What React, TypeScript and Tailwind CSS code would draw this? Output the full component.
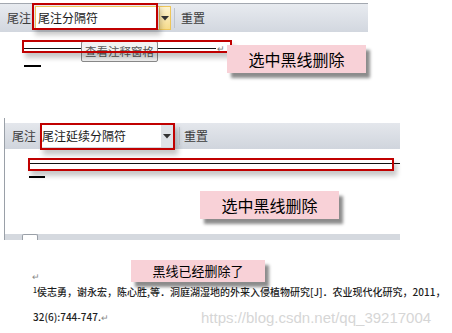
import React from 'react';

const cjk = { fontFamily: '"Noto Sans CJK SC", "Liberation Sans", sans-serif' };

// pink note with the hard grey shadow from the screenshot
const Callout: React.FC<{ text: string; className: string }> = ({ text, className }) => (
  <div
    className={`absolute flex items-center justify-center bg-[#f8d1d7] text-black shadow-[4px_5px_3px_rgba(0,0,0,0.45)] ${className}`}
  >
    {text}
  </div>
);

const RedBox: React.FC<{ className: string }> = ({ className }) => (
  <div
    className={`absolute border-2 border-[#c00000] shadow-[3px_5px_5px_rgba(0,0,0,0.22)] ${className}`}
  />
);

const Arrow: React.FC = () => (
  <svg width="8" height="5" viewBox="0 0 8 5">
    <path d="M0 0 L8 0 L4 4.5 Z" fill="#333" />
  </svg>
);

const App: React.FC = () => {
  return (
    <div className="relative w-[452px] h-[333px] overflow-hidden bg-white" style={cjk}>
      {/* first capture: separator dropdown */}
      <div className="relative h-[118px]">
        <div className="h-[3px]" />
        <div className="flex h-[29px] w-[368px] items-center border-t border-[#a3a8b0] bg-gradient-to-b from-[#e8ebf0] to-[#d2d7df]">
          <span className="ml-[7px] text-[12px] text-[#3c3c3c]">尾注</span>
          <div className="ml-[4px] flex h-[24px] w-[136px] border border-[#eec65a] bg-white">
            <span className="ml-[2px] flex-1 text-[12px] leading-[22px] text-[#1a1a1a]">尾注分隔符</span>
            <div className="flex w-[11px] items-center justify-center border-l border-[#eec65a] bg-gradient-to-b from-[#fdf3d0] to-[#f6dc8c]">
              <Arrow />
            </div>
          </div>
          <div className="ml-[3px] h-[20px] w-px bg-[#bfc4cb]" />
          <span className="ml-[6px] text-[12px] text-[#3c3c3c]">重置</span>
        </div>
        <div className="ml-[22px] mt-[12px] flex items-center">
          <div className="h-px w-[194px] bg-[#111]" />
          <span className="ml-[1px] text-[9px] leading-none text-[#777]">↵</span>
        </div>
        <div className="ml-[24px] mt-[12px] h-[2px] w-[17px] bg-black" />

        <div className="absolute left-[81px] top-[41px] flex h-[21px] w-[77px] items-center justify-center rounded-[2px] border border-[#8a8a8a] bg-[#f2f2f2] text-[11.5px] text-[#555]">
          查看注释窗格
        </div>
        <RedBox className="left-[32px] top-[3px] h-[27px] w-[126px]" />
        <RedBox className="left-[22px] top-[40px] h-[13px] w-[210px]" />
        <Callout text="选中黑线删除" className="left-[227px] top-[45px] h-[28px] w-[139px] text-[16px]" />
      </div>

      {/* second capture: continuation separator */}
      <div className="relative ml-[4px] h-[122px] w-[396px] border-l border-[#9aa0a8]">
        <div className="h-[5px]" />
        <div className="flex h-[26px] items-center bg-gradient-to-b from-[#e4e7ec] to-[#d0d5dd]">
          <span className="ml-[7px] text-[12px] text-[#3c3c3c]">尾注</span>
          <div className="ml-[5px] flex h-[22px] w-[132px] bg-white">
            <span className="ml-[1px] flex-1 text-[12px] leading-[22px] text-[#1a1a1a]">尾注延续分隔符</span>
            <div className="flex w-[12px] items-center justify-center bg-[#dfe2e7]">
              <Arrow />
            </div>
          </div>
          <div className="ml-[6px] h-[18px] w-px bg-[#c3c7cd]" />
          <span className="ml-[4px] text-[12px] text-[#3c3c3c]">重置</span>
        </div>
        <div className="ml-[23px] mt-[14px] h-px bg-[#111]" />
        <div className="ml-[24px] mt-[12px] h-[2px] w-[16px] bg-black" />
        <div className="absolute bottom-0 left-0 right-0 h-[6px] bg-[#d5d9df]">
          <div className="ml-[17px] h-[6px] w-[16px] rounded-t-[2px] border border-b-0 border-[#9aa0a8] bg-white" />
        </div>

        <RedBox className="left-[35px] top-[5px] h-[27px] w-[135px]" />
        <RedBox className="left-[23px] top-[40px] h-[13px] w-[366px]" />
        <Callout text="选中黑线删除" className="left-[195px] top-[73px] h-[28px] w-[139px] text-[16px]" />
      </div>

      {/* third capture: result */}
      <div className="relative h-[93px]">
        <div className="ml-[32px] pt-[31px] text-[9px] leading-[12px] text-[#888]">↵</div>
        <div className="ml-[33px] mt-[1px] whitespace-nowrap text-[10px] leading-[16px] text-[#1e1e1e] font-medium">
          <sup className="text-[7px]">1</sup>侯志勇，谢永宏，陈心胜,等．洞庭湖湿地的外来入侵植物研究[J]．农业现代化研究，2011，
        </div>
        <div className="ml-[33px] mt-[9px] flex items-end whitespace-nowrap">
          <span className="text-[10px] leading-[16px] text-[#1e1e1e] font-medium">
            32(6):744-747.<span className="text-[9px] text-[#888]">↵</span>
          </span>
          <span
            className="ml-[92px] text-[15px] leading-[16px] text-[#d6d6d6]"
            style={{ fontFamily: '"Liberation Sans", sans-serif' }}
          >
            https://blog.csdn.net/qq_39217004
          </span>
        </div>
        <Callout text="黑线已经删除了" className="left-[131px] top-[20px] h-[22px] w-[134px] text-[13px]" />
      </div>
    </div>
  );
};

export default App;
